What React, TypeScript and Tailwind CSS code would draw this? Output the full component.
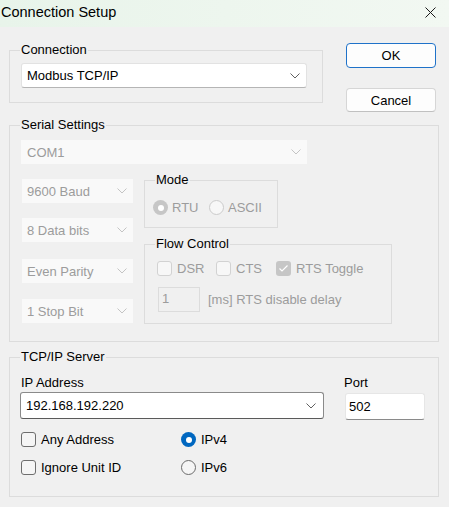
import React from "react";

function Chevron({ color }: { color: string }) {
  return (
    <svg width="10" height="6" viewBox="0 0 10 6" className="shrink-0">
      <path d="M0.5 0.5 L5 5 L9.5 0.5" fill="none" stroke={color} strokeWidth="1" />
    </svg>
  );
}

function GroupBox({ label, className, children }: { label: string; className: string; children?: React.ReactNode }) {
  return (
    <div className={"relative border border-[#dcdcdc] " + className}>
      <span className="absolute left-[10px] top-[-9px] bg-[#f0f0f0] px-[1px] text-[13px] leading-[15px] text-black">
        {label}
      </span>
      {children}
    </div>
  );
}

function DisabledCombo({ text, className }: { text: string; className: string }) {
  return (
    <div className={"flex items-center justify-between bg-[#f9f9f9] pl-[5px] pr-[6px] text-[13px] text-[#9c9c9c] " + className}>
      <span>{text}</span>
      <Chevron color="#c4c4c4" />
    </div>
  );
}

function Radio({ checked, disabled }: { checked?: boolean; disabled?: boolean }) {
  if (checked && !disabled) {
    return (
      <div className="flex h-[15px] w-[15px] shrink-0 items-center justify-center rounded-full bg-[#0067c0]">
        <div className="h-[6px] w-[6px] rounded-full bg-white" />
      </div>
    );
  }
  if (checked && disabled) {
    return (
      <div className="flex h-[15px] w-[15px] shrink-0 items-center justify-center rounded-full bg-[#c6c6c6]">
        <div className="h-[6px] w-[6px] rounded-full bg-white" />
      </div>
    );
  }
  if (disabled) {
    return <div className="h-[15px] w-[15px] shrink-0 rounded-full border border-[#cbcbcb] bg-[#f7f7f7]" />;
  }
  return <div className="h-[15px] w-[15px] shrink-0 rounded-full border border-[#6b6b6b] bg-[#f5f5f5]" />;
}

function Checkbox({ checked, disabled }: { checked?: boolean; disabled?: boolean }) {
  if (checked) {
    return (
      <div className="flex h-[15px] w-[15px] shrink-0 items-center justify-center rounded-[3px] bg-[#c6c6c6]">
        <svg width="11" height="9" viewBox="0 0 11 9">
          <path d="M1.5 4.5 L4 7 L9.5 1.5" fill="none" stroke="#ffffff" strokeWidth="1.2" />
        </svg>
      </div>
    );
  }
  if (disabled) {
    return <div className="h-[15px] w-[15px] shrink-0 rounded-[3px] border border-[#d2d2d2] bg-[#f7f7f7]" />;
  }
  return <div className="h-[15px] w-[15px] shrink-0 rounded-[3px] border border-[#6e6e6e] bg-[#f5f5f5]" />;
}

export default function App() {
  return (
    <div className="h-[507px] w-[449px] overflow-hidden bg-[#f0f0f0] text-[13px] leading-[15px] text-black [font-family:'Liberation_Sans',Arial,sans-serif]">
      {/* Title bar */}
      <div className="flex h-[27px] items-start bg-linear-to-r from-[#e8f4ea] to-[#f2f8f2]">
        <span className="mt-[3px] pl-[1px] text-[14.5px] leading-[18px] text-black">Connection Setup</span>
        <svg width="11" height="11" viewBox="0 0 11 11" className="ml-auto mr-[13px] mt-[7px]">
          <path d="M0.5 0.5 L10.5 10.5 M10.5 0.5 L0.5 10.5" fill="none" stroke="#1a1a1a" strokeWidth="1" />
        </svg>
      </div>

      {/* Top row */}
      <div className="flex items-start">
        <GroupBox label="Connection" className="ml-[9px] mt-[23px] h-[53px] w-[314px] pl-[11px] pt-[12px]">
          <div className="flex h-[25px] w-[286px] items-center justify-between rounded-[3px] border border-[#e2e2e2] border-b-[#b5b5b5] bg-white pl-[5px] pr-[6px]">
            <span>Modbus TCP/IP</span>
            <Chevron color="#606060" />
          </div>
        </GroupBox>
        <div className="ml-[23px] mt-[16px] flex flex-col">
          <div className="flex h-[25px] w-[90px] items-center justify-center rounded-[4px] border border-[#1f72c9] bg-[#fdfdfd]">
            OK
          </div>
          <div className="mt-[20px] flex h-[24px] w-[90px] items-center justify-center rounded-[4px] border border-[#d6d6d6] border-b-[#c0c0c0] bg-[#fdfdfd]">
            Cancel
          </div>
        </div>
      </div>

      {/* Serial Settings */}
      <GroupBox label="Serial Settings" className="ml-[9px] mt-[13px] h-[217px] w-[430px]">
        <DisabledCombo text="COM1" className="ml-[11px] mt-[14px] h-[24px] w-[286px] pl-[6px]" />
        <div className="ml-[12px] mt-[15px] flex items-start">
          <div className="flex w-[111px] flex-col">
            <DisabledCombo text="9600 Baud" className="h-[24px] w-[111px]" />
            <DisabledCombo text="8 Data bits" className="mt-[15px] h-[24px] w-[111px]" />
            <DisabledCombo text="Even Parity" className="mt-[17px] h-[24px] w-[111px]" />
            <DisabledCombo text="1 Stop Bit" className="mt-[16px] h-[24px] w-[111px]" />
          </div>
          <div className="ml-[11px] mt-[1px] flex flex-col">
            <GroupBox label="Mode" className="h-[48px] w-[134px] pl-[8px] pt-[19px]">
              <div className="flex items-center">
                <div className="flex w-[56px] items-center">
                  <Radio checked disabled />
                  <span className="ml-[4px] text-[#9c9c9c]">RTU</span>
                </div>
                <div className="flex items-center">
                  <Radio disabled />
                  <span className="ml-[4px] text-[#9c9c9c]">ASCII</span>
                </div>
              </div>
            </GroupBox>
            <GroupBox label="Flow Control" className="mt-[16px] h-[80px] w-[248px] pl-[12px] pt-[16px]">
              <div className="flex items-center">
                <div className="flex w-[59px] items-center">
                  <Checkbox disabled />
                  <span className="ml-[5px] text-[#9c9c9c]">DSR</span>
                </div>
                <div className="flex w-[60px] items-center">
                  <Checkbox disabled />
                  <span className="ml-[5px] text-[#9c9c9c]">CTS</span>
                </div>
                <div className="flex items-center">
                  <Checkbox checked disabled />
                  <span className="ml-[5px] text-[#9c9c9c]">RTS Toggle</span>
                </div>
              </div>
              <div className="ml-[1px] mt-[11px] flex items-center">
                <div className="flex h-[25px] w-[42px] items-start border border-[#dcdcdc] pl-[3px] pt-[3px] text-[#9c9c9c]">1</div>
                <span className="ml-[8px] text-[#9c9c9c]">[ms] RTS disable delay</span>
              </div>
            </GroupBox>
          </div>
        </div>
      </GroupBox>

      {/* TCP/IP Server */}
      <GroupBox label="TCP/IP Server" className="ml-[9px] mt-[15px] h-[140px] w-[430px]">
        <div className="mt-[17px] flex items-start">
          <div className="ml-[10px] flex flex-col">
            <span className="pl-[1px]">IP Address</span>
            <div className="mt-[2px] flex h-[27px] w-[304px] items-center justify-between rounded-[3px] border border-[#8a8a8a] border-b-[#5a5a5a] bg-white pl-[5px] pr-[7px]">
              <span>192.168.192.220</span>
              <Chevron color="#606060" />
            </div>
          </div>
          <div className="ml-[20px] flex flex-col">
            <span>Port</span>
            <div className="ml-[1px] mt-[3px] flex h-[27px] w-[80px] items-center rounded-[3px] border border-[#e6e6e6] border-b-[#8a8a8a] bg-white pl-[3px]">
              502
            </div>
          </div>
        </div>
        <div className="ml-[11px] mt-[12px] flex flex-col">
          <div className="flex items-center">
            <div className="flex w-[160px] items-center">
              <Checkbox />
              <span className="ml-[5px]">Any Address</span>
            </div>
            <div className="flex items-center">
              <Radio checked />
              <span className="ml-[5px]">IPv4</span>
            </div>
          </div>
          <div className="mt-[13px] flex items-center">
            <div className="flex w-[160px] items-center">
              <Checkbox />
              <span className="ml-[5px]">Ignore Unit ID</span>
            </div>
            <div className="flex items-center">
              <Radio />
              <span className="ml-[5px]">IPv6</span>
            </div>
          </div>
        </div>
      </GroupBox>
    </div>
  );
}
